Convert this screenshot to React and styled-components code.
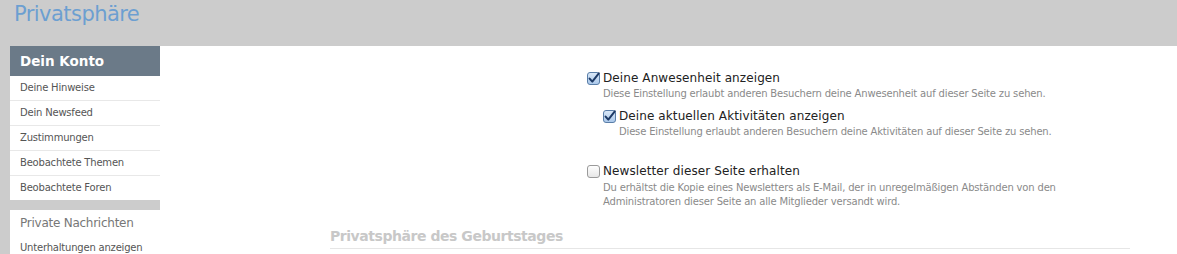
import React from "react";
import styled, { createGlobalStyle } from "styled-components";

const GlobalStyle = createGlobalStyle`
  html, body {
    margin: 0;
    padding: 0;
    background: #cccccc;
  }
  body {
    font-family: "DejaVu Sans", Verdana, sans-serif;
  }
`;

const Page = styled.div`
  width: 1177px;
  height: 254px;
  overflow: hidden;
  background: #cccccc;
`;

const Header = styled.div`
  height: 46px;
  padding-left: 14px;
  box-sizing: border-box;
`;

const Title = styled.h1`
  margin: 0;
  padding-top: 2px;
  font-family: "DejaVu Sans", Verdana, sans-serif;
  font-weight: normal;
  font-size: 21px;
  letter-spacing: -0.55px;
  color: #6c9fd1;
`;

const Body = styled.div`
  display: flex;
  align-items: flex-start;
`;

const Sidebar = styled.div`
  width: 150px;
  margin-left: 10px;
  display: flex;
  flex-direction: column;
  gap: 10px;
`;

const Block = styled.div`
  background: #ffffff;
`;

const BlockHead = styled.div`
  height: 30px;
  line-height: 30px;
  padding-left: 10px;
  background: #6b7a88;
  color: #ffffff;
  font-weight: bold;
  font-size: 13.5px;
`;

const BlockTitle = styled.div`
  padding: 6px 0 0 10px;
  height: 20px;
  color: #777777;
  font-size: 12px;
  letter-spacing: -0.25px;
`;

const NavItem = styled.div`
  height: ${(p) => (p.$tall ? 24 : 25)}px;
  line-height: 24px;
  padding-left: 10px;
  font-size: 10px;
  letter-spacing: -0.2px;
  color: #555555;
  border-bottom: ${(p) => (p.$last ? "none" : "1px solid #e8e8e8")};
  box-sizing: border-box;
`;

const Main = styled.div`
  flex: 1;
  height: 208px;
  background: #ffffff;
  padding: 24px 47px 0 170px;
  box-sizing: border-box;
`;

const Options = styled.div`
  padding-left: 257px;
  margin-bottom: 19px;
`;

const Option = styled.div`
  margin-left: ${(p) => (p.$nested ? 16 : 0)}px;
  margin-bottom: ${(p) => p.$gap || 0}px;
`;

const LabelRow = styled.label`
  display: flex;
  align-items: center;
  gap: 3px;
  font-family: "DejaVu Sans", Verdana, sans-serif;
  font-size: 12px;
  letter-spacing: 0.1px;
  color: #222222;
  height: 16px;
`;

const Hint = styled.div`
  padding-left: 16px;
  margin-top: ${(p) => p.$top || 1}px;
  font-size: 10px;
  letter-spacing: -0.17px;
  line-height: 14px;
  color: #8a8a8a;
  max-width: 480px;
`;

const BoxIcon = styled.svg`
  flex: none;
  width: 13px;
  height: 13px;
`;

const SectionTitle = styled.h3`
  margin: 0;
  padding-bottom: 4px;
  border-bottom: 1px solid #e6e6e6;
  font-size: 14px;
  font-weight: bold;
  letter-spacing: -0.45px;
  color: #c8c8c8;
`;

const Check = ({ checked }) => (
  <BoxIcon viewBox="0 0 13 13">
    <defs>
      <linearGradient id={checked ? "cbOn" : "cbOff"} x1="0" y1="0" x2="0" y2="1">
        <stop offset="0" stopColor={checked ? "#dbe9f8" : "#ffffff"} />
        <stop offset="1" stopColor={checked ? "#a9c7ea" : "#e6e6e6"} />
      </linearGradient>
    </defs>
    <rect
      x="0.5"
      y="0.5"
      width="12"
      height="12"
      rx="2.5"
      fill={`url(#${checked ? "cbOn" : "cbOff"})`}
      stroke={checked ? "#5a7ea8" : "#9a9a9a"}
    />
    {checked && (
      <path
        d="M2.6 6.6 L5.3 9.6 L11.8 1.4"
        fill="none"
        stroke="#1d3a66"
        strokeWidth="2"
        strokeLinecap="round"
        strokeLinejoin="round"
      />
    )}
  </BoxIcon>
);

const App = () => {
  return (
    <Page>
      <GlobalStyle />
      <Header>
        <Title>Privatsphäre</Title>
      </Header>
      <Body>
        <Sidebar>
          <Block>
            <BlockHead>Dein Konto</BlockHead>
            <NavItem>Deine Hinweise</NavItem>
            <NavItem>Dein Newsfeed</NavItem>
            <NavItem>Zustimmungen</NavItem>
            <NavItem>Beobachtete Themen</NavItem>
            <NavItem $last $tall>Beobachtete Foren</NavItem>
          </Block>
          <Block>
            <BlockTitle>Private Nachrichten</BlockTitle>
            <NavItem $last>Unterhaltungen anzeigen</NavItem>
          </Block>
        </Sidebar>
        <Main>
          <Options>
            <Option $gap={7}>
              <LabelRow>
                <Check checked />
                Deine Anwesenheit anzeigen
              </LabelRow>
              <Hint>Diese Einstellung erlaubt anderen Besuchern deine Anwesenheit auf dieser Seite zu sehen.</Hint>
            </Option>
            <Option $nested $gap={24}>
              <LabelRow>
                <Check checked />
                Deine aktuellen Aktivitäten anzeigen
              </LabelRow>
              <Hint>Diese Einstellung erlaubt anderen Besuchern deine Aktivitäten auf dieser Seite zu sehen.</Hint>
            </Option>
            <Option>
              <LabelRow>
                <Check />
                Newsletter dieser Seite erhalten
              </LabelRow>
              <Hint $top={2}>
                Du erhältst die Kopie eines Newsletters als E-Mail, der in unregelmäßigen Abständen von den
                Administratoren dieser Seite an alle Mitglieder versandt wird.
              </Hint>
            </Option>
          </Options>
          <SectionTitle>Privatsphäre des Geburtstages</SectionTitle>
        </Main>
      </Body>
    </Page>
  );
};

export default App;
